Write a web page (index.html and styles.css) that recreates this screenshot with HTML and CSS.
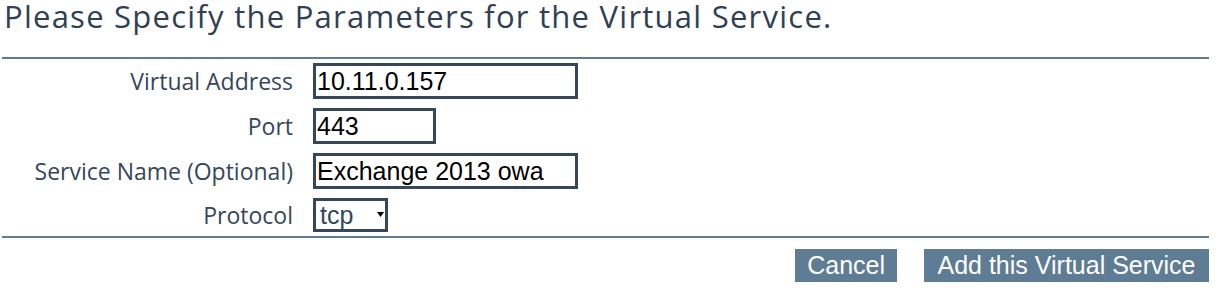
FILE: index.html
```html
<!DOCTYPE html>
<html>
<head>
<meta charset="utf-8">
<link rel="stylesheet" href="styles.css">
</head>
<body>
<div class="page">
  <h1 class="title">Please Specify the Parameters for the Virtual Service.</h1>
  <form class="form">
    <div class="fields">
      <label class="label" for="addr">Virtual Address</label>
      <div class="control"><input id="addr" class="text wide" type="text" value="10.11.0.157"></div>
      <label class="label" for="port">Port</label>
      <div class="control"><input id="port" class="text narrow" type="text" value="443"></div>
      <label class="label" for="name">Service Name (Optional)</label>
      <div class="control"><input id="name" class="text wide" type="text" value="Exchange 2013 owa"></div>
      <label class="label" for="proto">Protocol</label>
      <div class="control">
        <span class="select-wrap">
          <select id="proto" class="select">
            <option>tcp</option>
            <option>udp</option>
          </select>
          <svg class="caret" width="7" height="5" viewBox="0 0 7 5"><path d="M0 0 H7 L3.5 5 Z" fill="#000"/></svg>
        </span>
      </div>
    </div>
    <div class="actions">
      <button type="button" class="btn">Cancel</button>
      <button type="button" class="btn btn-primary">Add this Virtual Service</button>
    </div>
  </form>
</div>
</body>
</html>
```

FILE: styles.css
```css
html, body {
  margin: 0;
  padding: 0;
  background: #ffffff;
}

.page {
  margin-left: 2px;
  width: 1207px;
}

.title {
  margin: 0 0 24px 0;
  padding: 0 0 0 2px;
  font-family: "Open Sans", "Noto Sans", sans-serif;
  font-weight: 400;
  font-size: 31px;
  line-height: 33px;
  letter-spacing: 1.25px;
  color: #2f4055;
  white-space: nowrap;
}

.form {
  margin: 0;
}

.fields {
  border-top: 2px solid #5e7c94;
  border-bottom: 2px solid #5e7c94;
  padding: 4px 0 4px 0;
  display: grid;
  grid-template-columns: 291px auto;
  column-gap: 20px;
  row-gap: 9px;
  align-items: center;
}

.label {
  text-align: right;
  font-family: "Open Sans", "Noto Sans", sans-serif;
  font-size: 23px;
  color: #34475c;
  white-space: nowrap;
}

.control {
  display: flex;
  align-items: center;
}

.text {
  box-sizing: border-box;
  height: 36px;
  margin: 0;
  padding: 0 1px;
  border: 3px solid #34475b;
  border-radius: 0;
  font-family: "Liberation Sans", Arial, sans-serif;
  font-size: 25px;
  color: #000;
  background: #fff;
  outline: none;
}

.wide { width: 265px; }
.narrow { width: 123px; }

.select-wrap {
  position: relative;
  display: inline-block;
}

.select {
  appearance: none;
  -webkit-appearance: none;
  box-sizing: border-box;
  width: 75px;
  height: 34px;
  margin: 0;
  padding: 0 0 0 4px;
  border: 3px solid #34475b;
  border-radius: 0;
  background: #fff;
  font-family: "Liberation Sans", Arial, sans-serif;
  font-size: 25px;
  color: #2e4762;
  outline: none;
}

.caret {
  position: absolute;
  left: 64px;
  top: 14px;
  pointer-events: none;
}

.actions {
  display: flex;
  justify-content: flex-end;
  gap: 27px;
  margin-top: 11px;
}

.btn {
  box-sizing: border-box;
  height: 33px;
  margin: 0;
  padding: 0 12px;
  border: none;
  border-radius: 0;
  background: #5e7c94;
  color: #ffffff;
  font-family: "Liberation Sans", Arial, sans-serif;
  font-size: 25px;
  line-height: 33px;
}

.btn-primary {
  padding: 0 13.5px;
}
```
